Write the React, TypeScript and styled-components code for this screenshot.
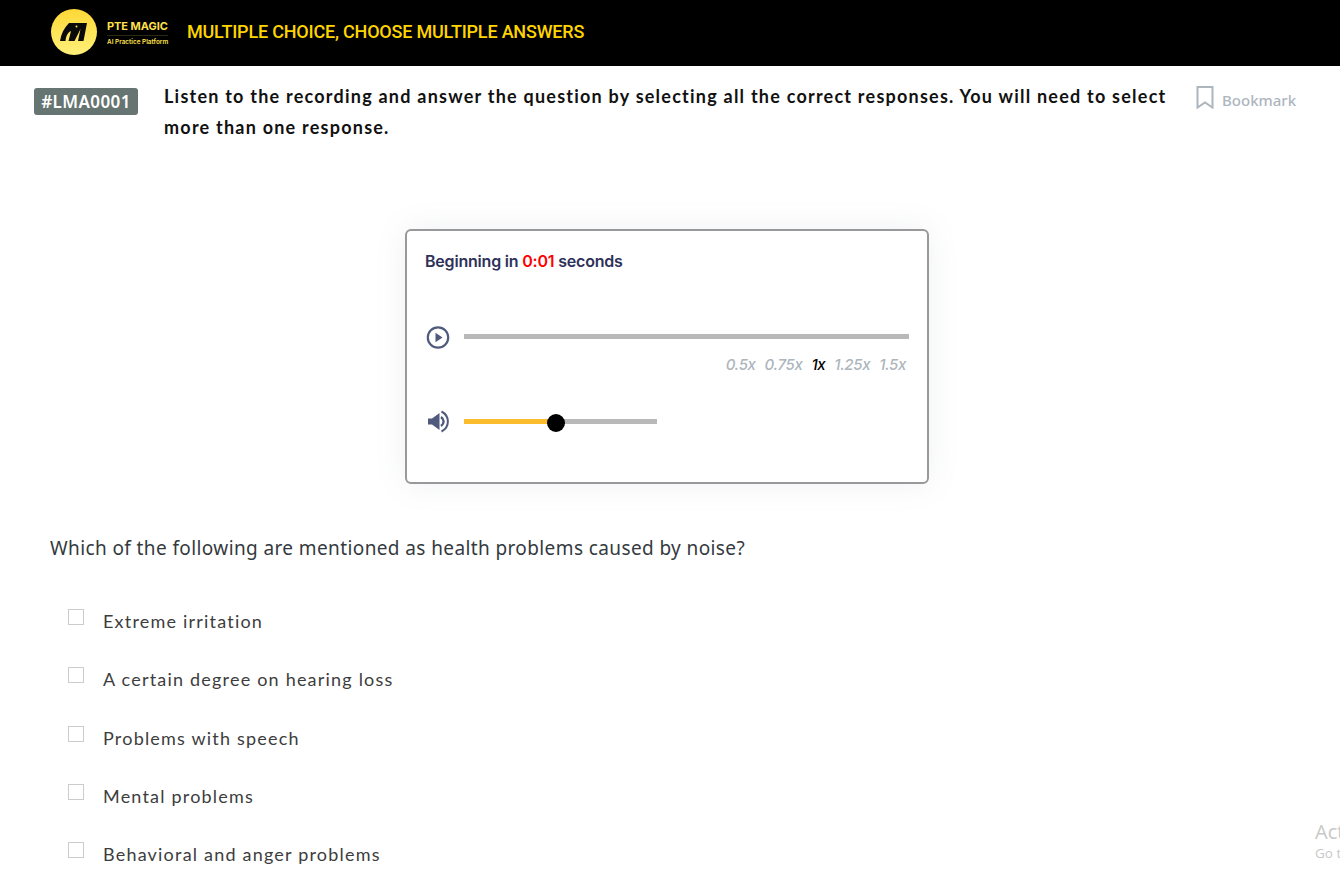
import React from 'react'
import styled, { createGlobalStyle } from 'styled-components'

const GlobalStyle = createGlobalStyle`
  html, body {
    margin: 0;
    padding: 0;
    height: 886px;
    overflow: hidden;
    background: #fff;
    font-family: 'Lato', sans-serif;
  }
`

const Page = styled.div`
  position: relative;
  width: 1340px;
  height: 886px;
  overflow: hidden;
`

const Header = styled.header`
  display: flex;
  align-items: center;
  height: 66px;
  padding: 0 0 3px 51px;
  box-sizing: border-box;
  background: #000;
`

const Logo = styled.svg`
  width: 46px;
  height: 46px;
  flex: none;
`

const Brand = styled.div`
  display: flex;
  flex-direction: column;
  width: 61px;
  margin: 3px 19px 0 10px;
  color: #ffe14d;
`

const BrandName = styled.div`
  font: 700 11px/13px 'Inter', sans-serif;
  letter-spacing: -0.05px;
  white-space: nowrap;
  padding-bottom: 2px;
  border-bottom: 1px solid #2c2a10;
`

const BrandTagline = styled.div`
  font: 600 6.4px/9px 'Inter', sans-serif;
  white-space: nowrap;
  margin-top: 2px;
`

const Title = styled.h1`
  margin: 0;
  color: #ffd500;
  font: 500 18px/24px 'Roboto', sans-serif;
  letter-spacing: -0.2px;
  white-space: nowrap;
`

const Intro = styled.section`
  display: flex;
  align-items: flex-start;
  padding: 15px 0 0 34px;
`

const QuestionTag = styled.div`
  flex: none;
  width: 104px;
  height: 27px;
  margin-top: 7px;
  background: #667572;
  border-radius: 3px;
  color: #fff;
  font: 600 17px/27px 'Noto Sans', sans-serif;
  letter-spacing: 0.4px;
  text-align: center;
`

const Instruction = styled.p`
  width: 1010px;
  margin: 0 0 0 26px;
  color: #111;
  font: 700 18px/31px 'Lato', sans-serif;
  letter-spacing: 1.23px;
`

const Bookmark = styled.div`
  display: flex;
  align-items: flex-start;
  gap: 8px;
  margin: 5px 0 0 22px;
  color: #adb5bd;
  font: 500 15px/20px 'Noto Sans', sans-serif;
  white-space: nowrap;
`

const BookmarkLabel = styled.span`
  margin-top: 4px;
`

const PlayerWrap = styled.div`
  display: flex;
  justify-content: center;
  padding: 86px 6px 0 0;
`

const Player = styled.div`
  width: 524px;
  height: 255px;
  box-sizing: border-box;
  padding: 19px 18px 0;
  background: #fff;
  border: 2px solid #999;
  border-radius: 6px;
  box-shadow: 0 0 30px rgba(120, 130, 160, 0.12);
`

const Countdown = styled.div`
  color: #2e3159;
  font: 600 16px/22px 'Inter', sans-serif;
  letter-spacing: -0.2px;
`

const Time = styled.span`
  color: #f00;
`

const ControlRow = styled.div<{ $top: number }>`
  display: flex;
  align-items: center;
  gap: 13px;
  height: 26px;
  margin-top: ${(p) => p.$top}px;
`

const ControlIcon = styled.svg`
  width: 25px;
  height: 25px;
  flex: none;
  margin-left: 1px;
`

const Track = styled.div<{ $width: number }>`
  position: relative;
  width: ${(p) => p.$width}px;
  height: 5px;
  margin-top: -1px;
  background: #b9b9b9;
`

const TrackFill = styled.div`
  height: 100%;
  background: #fbbd2e;
`

const Thumb = styled.div`
  position: absolute;
  top: -5px;
  width: 18px;
  height: 18px;
  margin-left: -9px;
  border-radius: 50%;
  background: #000;
`

const Speeds = styled.div`
  display: flex;
  justify-content: flex-end;
  gap: 9px;
  margin: 5px 3px 0 0;
`

const Speed = styled.span<{ $active?: boolean }>`
  color: ${(p) => (p.$active ? '#000' : '#adb5bd')};
  font: italic 500 15px/20px 'Inter', sans-serif;
  letter-spacing: -0.35px;
`

const Question = styled.p`
  margin: 51px 0 0 50px;
  color: #343a40;
  font: 400 19px/26px 'Noto Sans', sans-serif;
  letter-spacing: 0.39px;
`

const Options = styled.ul`
  list-style: none;
  margin: 48px 0 0 68px;
  padding: 0;
`

const OptionRow = styled.li`
  display: flex;
  align-items: flex-start;
  height: 58.25px;
`

const Box = styled.span`
  flex: none;
  width: 16px;
  height: 16px;
  box-sizing: border-box;
  border: 1px solid #ccc;
`

const OptionLabel = styled.span`
  margin: 0 0 0 19px;
  color: #3d3d3d;
  font: 400 18px/24px 'Lato', sans-serif;
  letter-spacing: 1.2px;
`

const Watermark = styled.div`
  position: absolute;
  left: 1315px;
  top: 819px;
  color: #c8c8c8;
  font-family: 'Open Sans', sans-serif;
  white-space: nowrap;
`

const WatermarkTitle = styled.div`
  font-size: 20px;
  line-height: 26px;
`

const WatermarkSub = styled.div`
  font-size: 13.5px;
  line-height: 17px;
`

const options = [
  'Extreme irritation',
  'A certain degree on hearing loss',
  'Problems with speech',
  'Mental problems',
  'Behavioral and anger problems',
]

const speeds = ['0.5x', '0.75x', '1x', '1.25x', '1.5x']

export default function App() {
  return (
    <Page>
      <GlobalStyle />
      <Header>
        <Logo viewBox="0 0 46 46">
          <defs>
            <linearGradient id="logoFill" x1="0" y1="0" x2="0" y2="1">
              <stop offset="0" stopColor="#ffd836" />
              <stop offset="1" stopColor="#fff07a" />
            </linearGradient>
          </defs>
          <circle cx="23" cy="23" r="23" fill="url(#logoFill)" />
          <path
            d="M18 14H36L32.500 32H27L29.500 20 23.500 32H17.500L20 22C16 24 15 28 14.500 32H9C10 25 13 19 18 14z"
            fill="#0a0a0a"
          />
          <circle cx="25.500" cy="17.500" r="1" fill="#ffe14d" />
        </Logo>
        <Brand>
          <BrandName>PTE MAGIC</BrandName>
          <BrandTagline>AI Practice Platform</BrandTagline>
        </Brand>
        <Title>MULTIPLE CHOICE, CHOOSE MULTIPLE ANSWERS</Title>
      </Header>

      <Intro>
        <QuestionTag>#LMA0001</QuestionTag>
        <Instruction>
          Listen to the recording and answer the question by selecting all the correct responses. You will need to
          select more than one response.
        </Instruction>
        <Bookmark>
          <svg width="18" height="23" viewBox="0 0 18 23" fill="none">
            <path d="M1.500 1h15v20.500L9 16.500l-7.500 5z" stroke="#adb5bd" strokeWidth="2" />
          </svg>
          <BookmarkLabel>Bookmark</BookmarkLabel>
        </Bookmark>
      </Intro>

      <PlayerWrap>
        <Player>
          <Countdown>
            Beginning in <Time>0:01</Time> seconds
          </Countdown>
          <ControlRow $top={52}>
            <ControlIcon viewBox="0 0 25 25" fill="none">
              <circle cx="12" cy="12.500" r="10.200" stroke="#505a7c" strokeWidth="2.200" />
              <path d="M9.500 7.800l7 4.700-7 4.700z" fill="#505a7c" />
            </ControlIcon>
            <Track $width={445} />
          </ControlRow>
          <Speeds>
            {speeds.map((speed) => (
              <Speed key={speed} $active={speed === '1x'}>
                {speed}
              </Speed>
            ))}
          </Speeds>
          <ControlRow $top={34}>
            <ControlIcon viewBox="0 0 25 25" fill="none">
              <path d="M2 8.500H6L13.500 3V20L6 14.500H2z" fill="#505a7c" />
              <path d="M15 7C18.500 9.500 18.500 13.500 15 16" stroke="#505a7c" strokeWidth="2.400" />
              <path d="M15.500 1.500C24 6 24 17 15.500 21.500" stroke="#505a7c" strokeWidth="2" />
            </ControlIcon>
            <Track $width={193}>
              <TrackFill style={{ width: '47.7%' }} />
              <Thumb style={{ left: '47.7%' }} />
            </Track>
          </ControlRow>
        </Player>
      </PlayerWrap>

      <Question>Which of the following are mentioned as health problems caused by noise?</Question>

      <Options>
        {options.map((option) => (
          <OptionRow key={option}>
            <Box />
            <OptionLabel>{option}</OptionLabel>
          </OptionRow>
        ))}
      </Options>

      <Watermark>
        <WatermarkTitle>Activate Windows</WatermarkTitle>
        <WatermarkSub>Go to Settings to activate Windows.</WatermarkSub>
      </Watermark>
    </Page>
  )
}
